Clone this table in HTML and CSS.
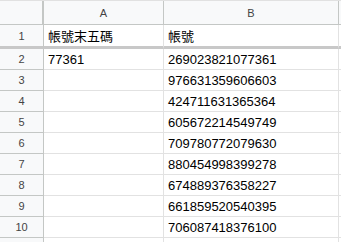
FILE: index.html
```html
<!DOCTYPE html>
<html>
<head>
<meta charset="utf-8">
<link rel="stylesheet" href="styles.css">
</head>
<body>
<div class="sheet">
  <div class="row head">
    <div class="cell rh corner"></div>
    <div class="cell ch">A</div>
    <div class="cell ch">B</div>
    <div class="cell ch"></div>
  </div>
  <div class="row frozen">
    <div class="cell rh">1</div>
    <div class="cell">帳號末五碼</div>
    <div class="cell">帳號</div>
    <div class="cell"></div>
  </div>
  <div class="row">
    <div class="cell rh">2</div>
    <div class="cell">77361</div>
    <div class="cell">269023821077361</div>
    <div class="cell"></div>
  </div>
  <div class="row">
    <div class="cell rh">3</div>
    <div class="cell"></div>
    <div class="cell">976631359606603</div>
    <div class="cell"></div>
  </div>
  <div class="row">
    <div class="cell rh">4</div>
    <div class="cell"></div>
    <div class="cell">424711631365364</div>
    <div class="cell"></div>
  </div>
  <div class="row">
    <div class="cell rh">5</div>
    <div class="cell"></div>
    <div class="cell">605672214549749</div>
    <div class="cell"></div>
  </div>
  <div class="row">
    <div class="cell rh">6</div>
    <div class="cell"></div>
    <div class="cell">709780772079630</div>
    <div class="cell"></div>
  </div>
  <div class="row">
    <div class="cell rh">7</div>
    <div class="cell"></div>
    <div class="cell">880454998399278</div>
    <div class="cell"></div>
  </div>
  <div class="row">
    <div class="cell rh">8</div>
    <div class="cell"></div>
    <div class="cell">674889376358227</div>
    <div class="cell"></div>
  </div>
  <div class="row">
    <div class="cell rh">9</div>
    <div class="cell"></div>
    <div class="cell">661859520540395</div>
    <div class="cell"></div>
  </div>
  <div class="row">
    <div class="cell rh">10</div>
    <div class="cell"></div>
    <div class="cell">706087418376100</div>
    <div class="cell"></div>
  </div>
  <div class="row">
    <div class="cell rh"></div>
    <div class="cell"></div>
    <div class="cell"></div>
    <div class="cell"></div>
  </div>
</div>
</body>
</html>
```

FILE: styles.css
```css
html, body {
  margin: 0;
  padding: 0;
  background: #ffffff;
}
.sheet {
  width: 341px;
  height: 242px;
  overflow: hidden;
  border-top: 1px solid #e1e1e1;
  font-family: "Liberation Sans", Arial, "Noto Sans CJK TC", sans-serif;
  font-size: 13px;
  color: #000;
}
.row {
  display: grid;
  grid-template-columns: 44px 120px 175px 40px;
  height: 21px;
}
.cell {
  box-sizing: border-box;
  border-right: 1px solid #e2e2e2;
  border-bottom: 1px solid #e2e2e2;
  padding: 0 4px;
  display: flex;
  align-items: center;
  white-space: nowrap;
  overflow: hidden;
  font-family: "Liberation Sans", Arial, "Noto Sans CJK TC", sans-serif;
}
.rh {
  justify-content: center;
  background: #f8f9fa;
  color: #444;
  font-size: 11px;
  border-right: 1px solid #c4c7c5;
  border-bottom-color: #c4c7c5;
}
.head {
  height: 24px;
}
.head .cell {
  background: #f8f9fa;
  border-bottom: 1px solid #c4c7c5;
  border-right-color: #c4c7c5;
}
.ch {
  justify-content: center;
  color: #444;
  font-size: 11px;
}
.corner {
  border-right: 2px solid #c4c7c5;
}
.frozen {
  height: 24px;
}
.frozen .cell {
  border-bottom: 3px solid #c8c8c8;
}
```
